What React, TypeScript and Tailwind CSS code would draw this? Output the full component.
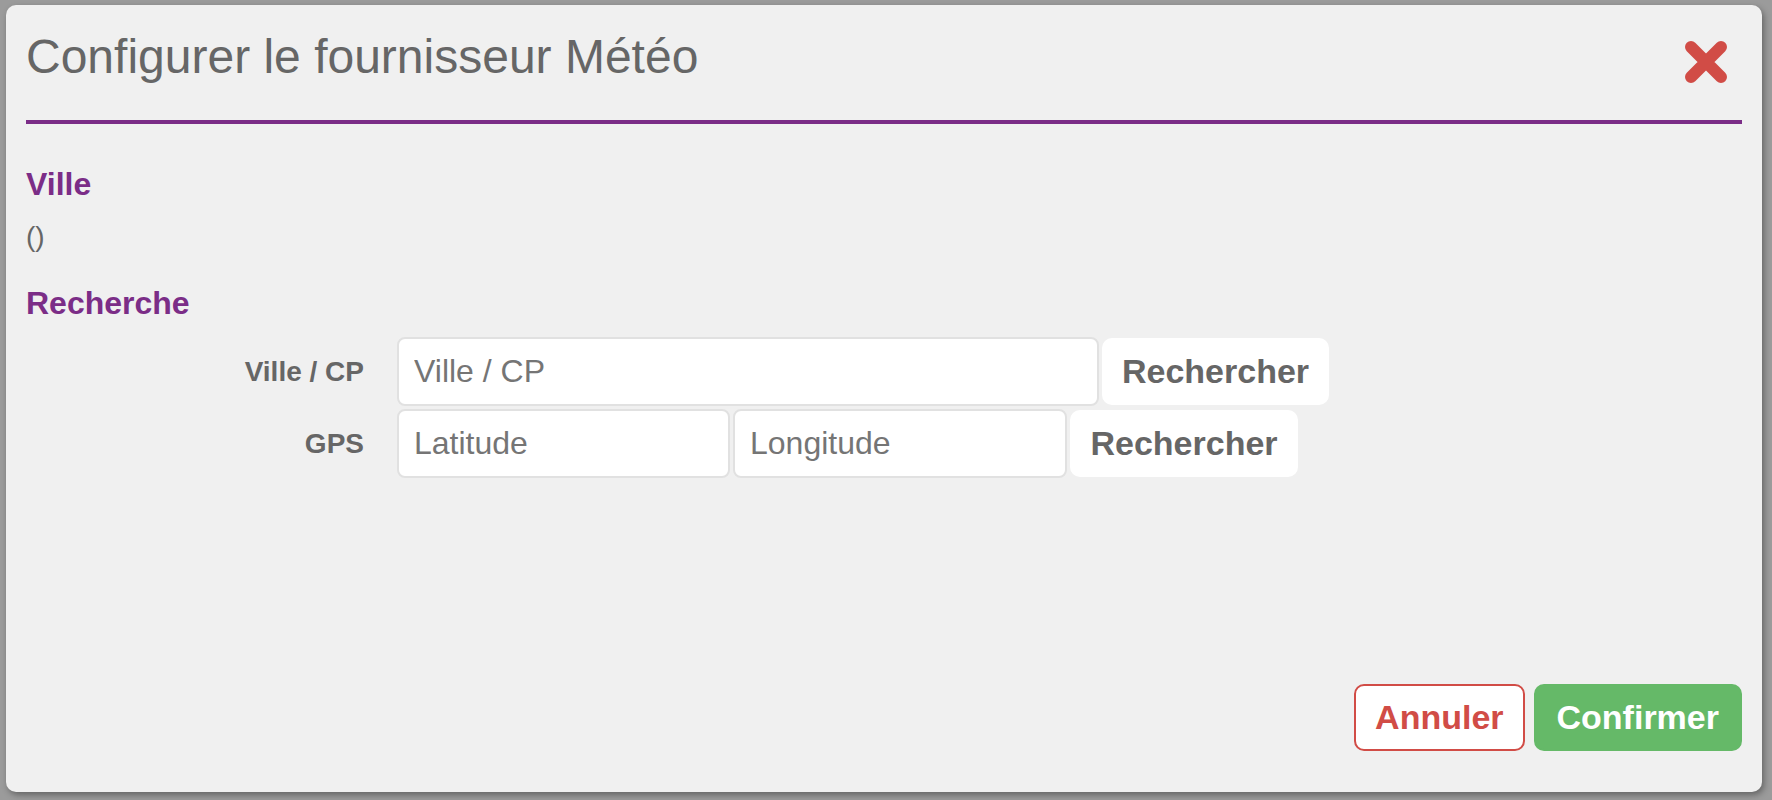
import React from "react";

const font = { fontFamily: '"Liberation Sans", Arial, Helvetica, sans-serif' };

function CloseIcon() {
  return (
    <svg width="42" height="42" viewBox="0 0 42 42" aria-hidden="true">
      <path
        d="M6 6 L36 36 M36 6 L6 36"
        stroke="#d14c46"
        strokeWidth="12"
        strokeLinecap="round"
        fill="none"
      />
    </svg>
  );
}

function Field({ placeholder, width }: { placeholder: string; width: string }) {
  return (
    <input
      type="text"
      placeholder={placeholder}
      className={`${width} h-[69px] rounded-[8px] border-2 border-[#e1e1e1] bg-white px-[15px] text-[32px] text-[#555] placeholder:text-[#757575] outline-none`}
      style={font}
    />
  );
}

function SearchButton({ width }: { width: string }) {
  return (
    <button
      className={`${width} h-[67px] rounded-[10px] bg-white text-[34px] font-bold text-[#666]`}
      style={font}
    >
      Rechercher
    </button>
  );
}

export default function App() {
  return (
    <div className="h-[800px] w-full overflow-hidden bg-[#9b9b9b] pl-[6px] pt-[5px]" style={font}>
      <div className="flex h-[787px] w-[1756px] flex-col rounded-[10px] bg-[#f0f0f0] shadow-[2px_3px_6px_rgba(0,0,0,0.35)]">
        {/* header */}
        <div className="mx-[20px] flex items-start justify-between border-b-4 border-[#7b2d87] pb-[37px] pt-[25px]">
          <h4 className="text-[48px] leading-[53px] font-normal text-[#666]">
            Configurer le fournisseur Météo
          </h4>
          <button className="mr-[15px] mt-[11px]">
            <CloseIcon />
          </button>
        </div>

        {/* body */}
        <div className="px-[20px]">
          <div className="mt-[42px] text-[32px] leading-[36px] font-bold text-[#7b2d87]">Ville</div>
          <div className="mt-[15px] text-[28px] leading-[40px] text-[#666]">()</div>
          <div className="mt-[28px] text-[32px] leading-[36px] font-bold text-[#7b2d87]">Recherche</div>

          <div className="mt-[16px] flex flex-col gap-[3px]">
            <div className="flex items-center">
              <label className="w-[338px] pr-0 text-right text-[28px] font-bold text-[#666]">Ville / CP</label>
              <div className="ml-[33px] flex items-center gap-[3px]">
                <Field placeholder="Ville / CP" width="w-[702px]" />
                <SearchButton width="w-[227px]" />
              </div>
            </div>
            <div className="flex items-center">
              <label className="w-[338px] text-right text-[28px] font-bold text-[#666]">GPS</label>
              <div className="ml-[33px] flex items-center gap-[3px]">
                <Field placeholder="Latitude" width="w-[333px]" />
                <Field placeholder="Longitude" width="w-[334px]" />
                <SearchButton width="w-[228px]" />
              </div>
            </div>
          </div>
        </div>

        {/* footer */}
        <div className="mt-auto flex justify-end gap-[9px] pb-[41px] pr-[20px]">
          <button className="h-[67px] rounded-[10px] border-2 border-[#d14c46] bg-white px-[19px] text-[34px] font-bold text-[#d14c46]">
            Annuler
          </button>
          <button className="h-[67px] rounded-[10px] border-2 border-[#65b968] bg-[#65b968] px-[21px] text-[34px] font-bold text-white">
            Confirmer
          </button>
        </div>
      </div>
    </div>
  );
}
